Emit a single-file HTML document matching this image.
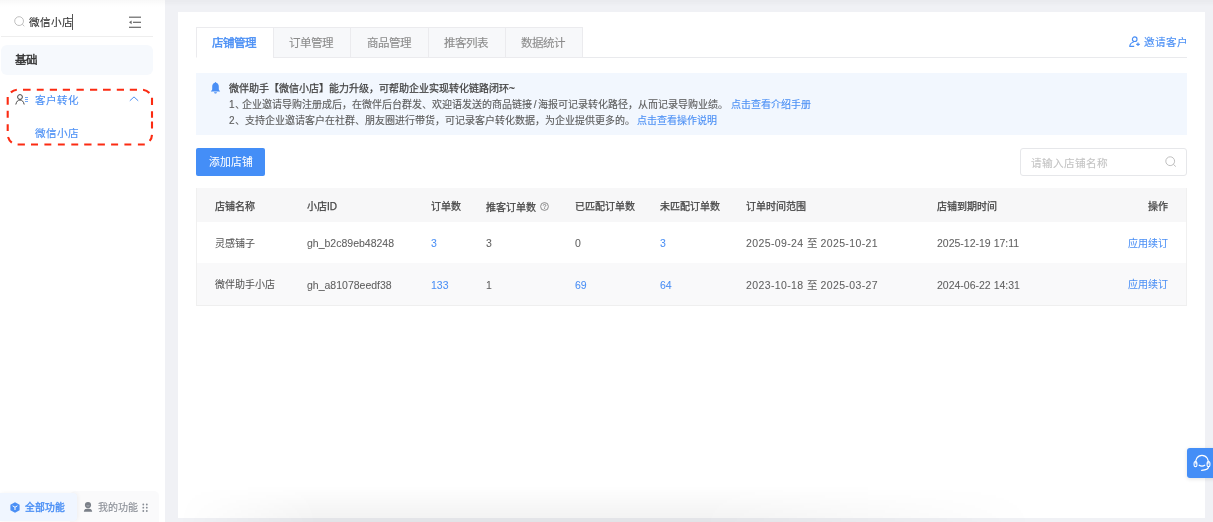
<!DOCTYPE html>
<html lang="zh-CN"><head><meta charset="utf-8">
<style>
*{box-sizing:border-box;margin:0;padding:0}
html,body{width:1213px;height:522px;overflow:hidden}
body{position:relative;will-change:transform;background:#f0f1f5;font-family:"Liberation Sans",sans-serif;color:#333}
.abs{position:absolute}
.t{position:absolute;white-space:nowrap;line-height:1;-webkit-text-stroke:0.12px currentColor}
#topshade{position:absolute;left:0;top:0;width:1213px;height:7px;background:linear-gradient(rgba(0,0,0,0.028),rgba(0,0,0,0));z-index:5}
#side{position:absolute;left:0;top:0;width:165px;height:522px;background:#fff}
#card{position:absolute;left:178px;top:11.5px;width:1027px;height:506.5px;background:#fff}
.tab{position:absolute;top:27px;height:31px;width:78px;border:1px solid #ebebee;background:#f7f8fa;color:#8c8c8c;font-size:11.5px;text-align:center;padding-right:2px;line-height:30px;-webkit-text-stroke:0.12px currentColor}
.tab.on{background:#fff;color:#4a8ff5;-webkit-text-stroke:0.4px currentColor;border-bottom-color:#fff}
.blue{color:#4a8ff5}
.row{position:absolute;left:196px;width:991px}
.cell{position:absolute;white-space:nowrap;font-size:10px;line-height:1;-webkit-text-stroke:0.06px currentColor}
</style></head><body>
<div id="topshade"></div>

<!-- SIDEBAR -->
<div id="side">
  <svg class="abs" style="left:14px;top:16px" width="12" height="12" viewBox="0 0 12 12"><circle cx="5.1" cy="5.1" r="4.4" fill="none" stroke="#bcbcbc" stroke-width="0.95"/><line x1="8.3" y1="8.3" x2="10.3" y2="10.2" stroke="#bcbcbc" stroke-width="0.95"/></svg>
  <div class="t" style="left:29px;top:17.2px;font-size:10.6px;color:#333">微信小店</div>
  <div class="abs" style="left:72px;top:14px;width:1px;height:16px;background:#555"></div>
  <svg class="abs" style="left:128px;top:15px" width="14" height="14" viewBox="0 0 14 14"><g stroke="#666" stroke-width="1.2"><line x1="1" y1="2.2" x2="13" y2="2.2"/><line x1="5" y1="7.3" x2="13" y2="7.3"/><line x1="1" y1="12.3" x2="13" y2="12.3"/></g><path d="M3.6 5.4 L1 7.3 L3.6 9.2 Z" fill="#666"/></svg>
  <div class="abs" style="left:1px;top:36px;width:152px;height:1px;background:#eeeeee"></div>
  <div class="abs" style="left:1px;top:44.5px;width:152px;height:30.5px;background:#f6f9fd;border-radius:6px"></div>
  <div class="t" style="left:14.5px;top:55px;font-size:11.5px;-webkit-text-stroke:0.4px currentColor;color:#333">基础</div>

  <svg class="abs" style="left:0;top:0" width="166" height="160" viewBox="0 0 166 160"><path d="M23.0 89.7H30.6M36.8 89.7H43.7M49.8 89.7H57.0M62.8 89.7H70.0M76.5 89.7H83.8M90.0 89.7H97.2M103.0 89.7H110.7M116.8 89.7H124.0M129.8 89.7H137.0M17.6 144.5H24.9M31.0 144.5H38.0M44.4 144.5H51.3M57.9 144.5H64.8M71.3 144.5H78.2M84.2 144.5H91.5M97.6 144.5H104.9M111.1 144.5H118.1M124.4 144.5H131.3M137.9 144.5H144.8M7.7 97.0V104.7M7.7 110.8V117.7M7.7 124.2V131.0M152.0 97.8V105.0M152.0 111.2V117.7M152.0 121.5V128.4M10.88 92.39A10 10 0 0 1 16.83 89.74M143.05 89.75A10 10 0 0 1 149.43 93.01M151.99 134.85A10 10 0 0 1 149.66 140.93M11.82 142.59A10 10 0 0 1 8.04 137.09" fill="none" stroke="#fb2b12" stroke-width="2.1"/></svg>
  <svg class="abs" style="left:14.8px;top:94px" width="14" height="11" viewBox="0 0 14 11"><circle cx="5" cy="3" r="2.4" fill="none" stroke="#444" stroke-width="1"/><path d="M0.8 10.5 Q1.8 6 5 6 Q8.2 6 9.2 10.5" fill="none" stroke="#444" stroke-width="1"/><g stroke="#4a8ff5" stroke-width="0.8"><line x1="10" y1="3.5" x2="13" y2="3.5"/><line x1="10" y1="5.5" x2="13" y2="5.5"/><line x1="10" y1="7.5" x2="13" y2="7.5"/></g></svg>
  <div class="t blue" style="left:35px;top:95.3px;font-size:10.6px">客户转化</div>
  <svg class="abs" style="left:128px;top:95px" width="12" height="8" viewBox="0 0 12 8"><path d="M1.8 5.8 L6 1.9 L10.2 5.8" fill="none" stroke="#4a8ff5" stroke-width="1"/></svg>
  <div class="t blue" style="left:35px;top:128.3px;font-size:10.6px">微信小店</div>

  <!-- bottom tabs -->
  <div class="abs" style="left:70px;top:491px;width:89px;height:35px;background:#fafafb;border-radius:5px"></div>
  <div class="abs" style="left:0;top:492.7px;width:77px;height:28.8px;background:#f0f6ff;border-radius:0 4px 4px 0;box-shadow:1px 0 4px rgba(0,0,0,0.05)"></div>
  <svg class="abs" style="left:10px;top:502px" width="10" height="11" viewBox="0 0 10 11"><path d="M5 0.3 L9.6 2.8 L9.6 8.2 L5 10.7 L0.4 8.2 L0.4 2.8 Z" fill="#4a8ff5"/><path d="M2.6 3.8 L5 5.3 L7.4 3.8 M5 5.3 L5 8" stroke="#fff" stroke-width="1" fill="none"/></svg>
  <div class="t blue" style="left:24.5px;top:503px;font-size:9.8px;-webkit-text-stroke:0.4px currentColor">全部功能</div>
  <svg class="abs" style="left:83px;top:501px" width="10" height="12" viewBox="0 0 10 12"><circle cx="5" cy="4" r="3.1" fill="#7b8089"/><path d="M3.6 4.6 Q5 5.6 6.4 4.6" stroke="#c9ccd2" stroke-width="0.6" fill="none"/><path d="M0.8 10.8 Q1 7.4 5 7.4 Q9 7.4 9.2 10.8 Z" fill="#7b8089"/></svg>
  <div class="t" style="left:98px;top:502.5px;font-size:10px;color:#8b8f97">我的功能</div>
  <svg class="abs" style="left:141px;top:502px" width="8" height="11" viewBox="0 0 8 11"><g fill="#858a92"><circle cx="2.3" cy="2.5" r="0.9"/><circle cx="5.8" cy="2.5" r="0.9"/><circle cx="2.3" cy="5.7" r="0.9"/><circle cx="5.8" cy="5.7" r="0.9"/><circle cx="2.3" cy="9" r="0.9"/><circle cx="5.8" cy="9" r="0.9"/></g></svg>
</div>

<!-- MAIN CARD -->
<div id="card"></div>

<!-- tabs -->
<div class="abs" style="left:196px;top:57px;width:991px;height:1px;background:#e9eaed"></div>
<div class="tab on" style="left:196px">店铺管理</div>
<div class="tab" style="left:273px">订单管理</div>
<div class="tab" style="left:350px;width:79px">商品管理</div>
<div class="tab" style="left:428px">推客列表</div>
<div class="tab" style="left:505px">数据统计</div>

<svg class="abs" style="left:1128px;top:36px" width="13" height="12" viewBox="0 0 13 12"><circle cx="6.7" cy="3.2" r="2.3" fill="none" stroke="#4a8ff5" stroke-width="1.15"/><path d="M5.6 6.2 Q2.2 6.6 1.7 10.4 L6.2 10.4" fill="none" stroke="#4a8ff5" stroke-width="1.15" stroke-linejoin="round"/><path d="M8.2 8.3 H11.8 M10 6.5 V10.1" stroke="#4a8ff5" stroke-width="1.15"/></svg>
<div class="t blue" style="left:1143.5px;top:37.3px;font-size:10.6px">邀请客户</div>

<!-- notice -->
<div class="abs" style="left:196px;top:73px;width:991px;height:62px;background:#f2f7fe"></div>
<svg class="abs" style="left:210px;top:81px" width="11" height="13" viewBox="0 0 11 13"><path d="M5.5 1 C5.9 1 6.1 1.4 6.2 1.8 C8 2.3 8.8 3.8 8.8 5.8 L8.8 8.3 C8.8 9.1 9.5 9.7 10.2 10.4 L0.8 10.4 C1.5 9.7 2.2 9.1 2.2 8.3 L2.2 5.8 C2.2 3.8 3 2.3 4.8 1.8 C4.9 1.4 5.1 1 5.5 1 Z M4 11.2 L7 11.2 C6.8 12.1 6.2 12.5 5.5 12.5 C4.8 12.5 4.2 12.1 4 11.2 Z" fill="#4a8ff5"/></svg>
<div class="t" style="left:229px;top:83.5px;font-size:10px;-webkit-text-stroke:0.25px currentColor;color:#444">微伴助手【微信小店】能力升级，可帮助企业实现转化链路闭环~</div>
<div class="t" style="left:229px;top:99.6px;font-size:10px;color:#5c5c5c">1<span style="margin-right:-2.3px">、</span>企业邀请导购注册成后，在微伴后台群发、欢迎语发送的商品链接<span style="margin:0 1.5px">/</span>海报可记录转化路径，从而记录导购业绩。 <span class="blue">点击查看介绍手册</span></div>
<div class="t" style="left:229px;top:115.6px;font-size:10px;color:#5c5c5c">2、支持企业邀请客户在社群、朋友圈进行带货，可记录客户转化数据，为企业提供更多的。 <span class="blue">点击查看操作说明</span></div>

<!-- button & search -->
<div class="abs" style="left:196px;top:148px;width:69px;height:28px;background:#448ef7;border-radius:2px"></div>
<div class="t" style="left:209.3px;top:157px;font-size:10.8px;color:#fff;-webkit-text-stroke:0.05px #fff">添加店铺</div>
<div class="abs" style="left:1020px;top:148px;width:167px;height:28px;border:1px solid #e6e7ea;border-radius:3px;background:#fff"></div>
<div class="t" style="left:1031px;top:157.5px;font-size:10.6px;color:#c4c4c4">请输入店铺名称</div>
<svg class="abs" style="left:1165px;top:156px" width="12" height="12" viewBox="0 0 12 12"><circle cx="5.2" cy="5.2" r="4.4" fill="none" stroke="#bfbfbf" stroke-width="1"/><line x1="8.3" y1="8.3" x2="10.8" y2="10.6" stroke="#bfbfbf" stroke-width="1"/></svg>

<!-- table -->
<div class="row" style="top:188px;height:34px;background:#f7f7f8"></div>
<div class="row" style="top:222px;height:41px;background:#fff"></div>
<div class="row" style="top:263px;height:42.5px;background:#f9f9fa"></div>
<div class="abs" style="left:196px;top:188px;width:1px;height:118px;background:#f0f0f0"></div><div class="abs" style="left:1186px;top:188px;width:1px;height:118px;background:#f0f0f0"></div>
<div class="abs" style="left:196px;top:305.3px;width:991px;height:1px;background:#efefef"></div>

<div class="cell" style="top:201.5px;left:215px;-webkit-text-stroke:0.25px currentColor;color:#444">店铺名称</div>
<div class="cell" style="top:201.5px;left:307px;-webkit-text-stroke:0.25px currentColor;color:#444">小店ID</div>
<div class="cell" style="top:201.5px;left:431px;-webkit-text-stroke:0.25px currentColor;color:#444">订单数</div>
<div class="cell" style="top:201.5px;left:486px;-webkit-text-stroke:0.25px currentColor;color:#444">推客订单数 <svg width="9" height="9" viewBox="0 0 9 9" style="vertical-align:-0.5px;margin-left:1px"><circle cx="4.5" cy="4.5" r="3.9" fill="none" stroke="#7a7a7a" stroke-width="0.85"/><path d="M3.2 3.6 Q3.3 2.4 4.5 2.4 Q5.8 2.4 5.8 3.5 Q5.8 4.3 4.6 4.8 L4.6 5.5" fill="none" stroke="#7a7a7a" stroke-width="0.85"/><circle cx="4.6" cy="6.6" r="0.5" fill="#7a7a7a"/></svg></div>
<div class="cell" style="top:201.5px;left:575px;-webkit-text-stroke:0.25px currentColor;color:#444">已匹配订单数</div>
<div class="cell" style="top:201.5px;left:660px;-webkit-text-stroke:0.25px currentColor;color:#444">未匹配订单数</div>
<div class="cell" style="top:201.5px;left:746px;-webkit-text-stroke:0.25px currentColor;color:#444">订单时间范围</div>
<div class="cell" style="top:201.5px;left:937px;-webkit-text-stroke:0.25px currentColor;color:#444">店铺到期时间</div>
<div class="cell" style="top:201.5px;left:1148px;-webkit-text-stroke:0.25px currentColor;color:#444">操作</div>

<div class="cell" style="top:238.7px;left:215px;color:#555">灵感铺子</div>
<div class="cell" style="top:238px;left:307px;color:#606060;font-size:10.5px">gh_b2c89eb48248</div>
<div class="cell blue" style="top:238px;left:431px;font-size:10.5px">3</div>
<div class="cell" style="top:238px;left:486px;color:#606060;font-size:10.5px">3</div>
<div class="cell" style="top:238px;left:575px;color:#606060;font-size:10.5px">0</div>
<div class="cell blue" style="top:238px;left:660px;font-size:10.5px">3</div>
<div class="cell" style="top:238px;left:746px;color:#606060;font-size:10.5px"><span style="letter-spacing:0.38px">2025-09-24 至 2025-10-21</span></div>
<div class="cell" style="top:238px;left:937px;color:#606060;font-size:10.5px">2025-12-19 17:11</div>
<div class="cell blue" style="top:238.7px;left:1128px">应用续订</div>

<div class="cell" style="top:280px;left:215px;color:#555">微伴助手小店</div>
<div class="cell" style="top:279.5px;left:307px;color:#606060;font-size:10.5px">gh_a81078eedf38</div>
<div class="cell blue" style="top:279.5px;left:431px;font-size:10.5px">133</div>
<div class="cell" style="top:279.5px;left:486px;color:#606060;font-size:10.5px">1</div>
<div class="cell blue" style="top:279.5px;left:575px;font-size:10.5px">69</div>
<div class="cell blue" style="top:279.5px;left:660px;font-size:10.5px">64</div>
<div class="cell" style="top:279.5px;left:746px;color:#606060;font-size:10.5px"><span style="letter-spacing:0.38px">2023-10-18 至 2025-03-27</span></div>
<div class="cell" style="top:279.5px;left:937px;color:#606060;font-size:10.5px">2024-06-22 14:31</div>
<div class="cell blue" style="top:280px;left:1128px">应用续订</div>

<div class="abs" style="left:178px;top:486px;width:1035px;height:36px;background:linear-gradient(rgba(0,0,0,0),rgba(0,0,0,0.055));-webkit-mask-image:linear-gradient(to right,transparent 0px,#000 140px,#000 520px,transparent 860px)"></div>
<!-- customer service float -->
<div class="abs" style="left:1186.5px;top:447.8px;width:40px;height:30.2px;background:#448ef7;border-radius:3px;box-shadow:0 1px 4px rgba(0,0,0,0.12)"></div>
<svg class="abs" style="left:1192px;top:454px" width="21" height="18" viewBox="0 0 21 18"><path d="M4.2 10.2 A6.3 6.3 0 1 1 15.8 10.2" fill="none" stroke="#fff" stroke-width="1.2"/><rect x="2.1" y="7.6" width="2.8" height="5" rx="1.4" fill="none" stroke="#fff" stroke-width="1.1"/><rect x="15.1" y="7.6" width="2.8" height="5" rx="1.4" fill="none" stroke="#fff" stroke-width="1.1"/><path d="M7.2 11.2 Q10 12.9 12.8 11.2" fill="none" stroke="#fff" stroke-width="1.2" stroke-linecap="round"/><path d="M16.6 12.6 Q16.4 15.9 9.6 16.3" fill="none" stroke="#fff" stroke-width="1.2" stroke-linecap="round"/></svg>
</body></html>
